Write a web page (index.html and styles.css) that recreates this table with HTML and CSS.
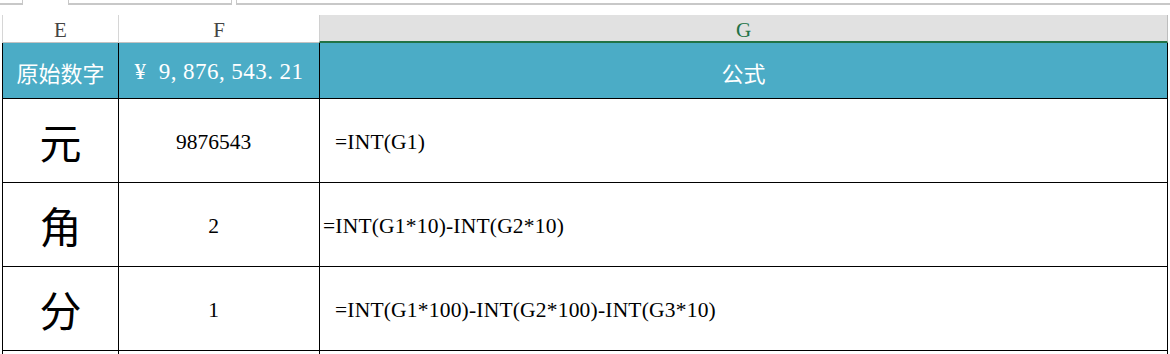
FILE: index.html
```html
<!DOCTYPE html>
<html lang="zh">
<head>
<meta charset="utf-8">
<title>Sheet</title>
<link rel="stylesheet" href="styles.css">
</head>
<body>
<div class="tabs">
  <div class="tab t1"></div>
  <div class="tab t-gap"></div>
  <div class="tab t2"></div>
  <div class="tab t3"></div>
</div>
<div class="sheet">
  <div class="ch">E</div>
  <div class="ch">F</div>
  <div class="ch sel">G</div>

  <div class="c hd cjk">原始数字</div>
  <div class="c hd money"><span class="money-t">¥<span class="sp">&nbsp;</span>9<span class="sp">,</span>876<span class="sp">,</span>543<span class="sp">.</span>21</span></div>
  <div class="c hd cjk last">公式</div>

  <div class="c big">元</div>
  <div class="c num">9876543</div>
  <div class="c f ind last">=INT(G1)</div>

  <div class="c big">角</div>
  <div class="c num">2</div>
  <div class="c f last">=INT(G1*10)-INT(G2*10)</div>

  <div class="c big">分</div>
  <div class="c num">1</div>
  <div class="c f ind last">=INT(G1*100)-INT(G2*100)-INT(G3*10)</div>

  <div class="c"></div>
  <div class="c"></div>
  <div class="c last"></div>
</div>
</body>
</html>
```

FILE: styles.css
```css
* { box-sizing: border-box; }
html, body {
  margin: 0;
  padding: 0;
  background: #ffffff;
  overflow: hidden;
}
body {
  width: 1170px;
  height: 354px;
  font-family: "Liberation Serif", "Noto Sans CJK SC", serif;
}

.tabs {
  display: flex;
  height: 15px;
  align-items: flex-start;
}
.tab {
  height: 5px;
  border-bottom: 2px solid #c8c8c8;
}
.t1 { width: 23px; border-right: 1px solid #c8c8c8; }
.t-gap { width: 45px; border-bottom: none; }
.t2 { width: 164px; border-left: 1px solid #c8c8c8; border-right: 1px solid #c8c8c8; }
.t3 { flex: 1; margin-left: 4px; border-left: 1px solid #c8c8c8; }

.sheet {
  margin-left: 2px;
  display: grid;
  grid-template-columns: 116px 201px 849px;
  grid-template-rows: 28px 55px 84px 84px 84px 4px;
}

.ch {
  display: flex;
  align-items: center;
  justify-content: center;
  padding-top: 4px;
  background: #ffffff;
  border-left: 1px solid #d6d6d6;
  border-bottom: 1px solid #c2c2c2;
  font-family: "Liberation Serif", serif;
  font-size: 21px;
  color: #444444;
}
.ch.sel {
  background: #e1e1e1;
  border-left: 1px solid #d0d0d0;
  border-right: 1px solid #bdbdbd;
  border-bottom: 2px solid #217346;
  color: #217346;
}

.c {
  display: flex;
  align-items: center;
  justify-content: center;
  border-left: 1px solid #000000;
  border-top: 1px solid #000000;
  color: #000000;
  white-space: nowrap;
  overflow: hidden;
}
.c.last { border-right: 1px solid #000000; }

.hd {
  border-top: none;
  background: #4bacc6;
  color: #ffffff;
  padding-top: 2px;
}
.cjk {
  font-family: "Noto Sans CJK SC", sans-serif;
  font-size: 22px;
}
.money {
  font-family: "Liberation Serif", serif;
  font-size: 23px;
  letter-spacing: 0.5px;
}
.money .sp { letter-spacing: 6.5px; }

.big {
  font-family: "Noto Sans CJK SC", sans-serif;
  font-size: 42px;
  padding-top: 0;
}
.num {
  font-size: 21.5px;
  padding-right: 11px;
  padding-top: 4px;
}
.f {
  justify-content: flex-start;
  font-size: 21.5px;
  letter-spacing: 0.2px;
  padding-left: 3px;
  padding-top: 4px;
}
.f.ind { padding-left: 15px; }
```
